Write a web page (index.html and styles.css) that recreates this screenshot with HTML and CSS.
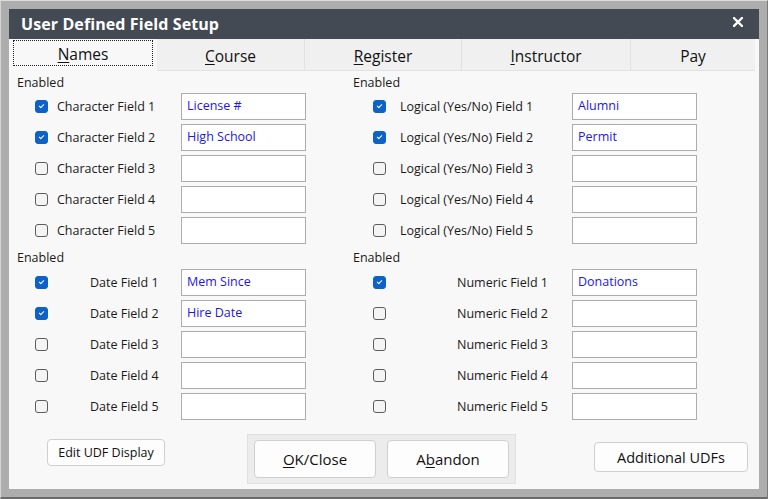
FILE: index.html
```html
<!DOCTYPE html>
<html>
<head>
<meta charset="utf-8">
<link rel="stylesheet" href="styles.css">
</head>
<body>
<div class="frame">
  <div class="dialog">
    <div class="titlebar">
      <span class="title">User Defined Field Setup</span>
      <svg class="close" width="10" height="10" viewBox="0 0 10 10"><path d="M1 1L9 9M9 1L1 9" stroke="#fff" stroke-width="2.4" stroke-linecap="square"/></svg>
    </div>
    <div class="tabs">
      <div class="tab active"><span class="focus"><u>N</u>ames</span></div>
      <div class="tab t-course"><u>C</u>ourse</div>
      <div class="tab t-register"><u>R</u>egister</div>
      <div class="tab t-instr"><u>I</u>nstructor</div>
      <div class="tab t-pay">Pay</div>
    </div>
    <div class="content">
      <div class="section">
        <div class="col left">
          <div class="enabled">Enabled</div>
          <div class="row"><span class="cb on"></span><span class="lbl">Character Field 1</span><span class="inp">License #</span></div>
          <div class="row"><span class="cb on"></span><span class="lbl">Character Field 2</span><span class="inp">High School</span></div>
          <div class="row"><span class="cb"></span><span class="lbl">Character Field 3</span><span class="inp"></span></div>
          <div class="row"><span class="cb"></span><span class="lbl">Character Field 4</span><span class="inp"></span></div>
          <div class="row"><span class="cb"></span><span class="lbl">Character Field 5</span><span class="inp"></span></div>
        </div>
        <div class="col right">
          <div class="enabled">Enabled</div>
          <div class="row"><span class="cb on"></span><span class="lbl">Logical (Yes/No) Field 1</span><span class="inp">Alumni</span></div>
          <div class="row"><span class="cb on"></span><span class="lbl">Logical (Yes/No) Field 2</span><span class="inp">Permit</span></div>
          <div class="row"><span class="cb"></span><span class="lbl">Logical (Yes/No) Field 3</span><span class="inp"></span></div>
          <div class="row"><span class="cb"></span><span class="lbl">Logical (Yes/No) Field 4</span><span class="inp"></span></div>
          <div class="row"><span class="cb"></span><span class="lbl">Logical (Yes/No) Field 5</span><span class="inp"></span></div>
        </div>
      </div>
      <div class="section second">
        <div class="col left date">
          <div class="enabled">Enabled</div>
          <div class="row"><span class="cb on"></span><span class="lbl">Date Field 1</span><span class="inp">Mem Since</span></div>
          <div class="row"><span class="cb on"></span><span class="lbl">Date Field 2</span><span class="inp">Hire Date</span></div>
          <div class="row"><span class="cb"></span><span class="lbl">Date Field 3</span><span class="inp"></span></div>
          <div class="row"><span class="cb"></span><span class="lbl">Date Field 4</span><span class="inp"></span></div>
          <div class="row"><span class="cb"></span><span class="lbl">Date Field 5</span><span class="inp"></span></div>
        </div>
        <div class="col right numeric">
          <div class="enabled">Enabled</div>
          <div class="row"><span class="cb on"></span><span class="lbl">Numeric Field 1</span><span class="inp">Donations</span></div>
          <div class="row"><span class="cb"></span><span class="lbl">Numeric Field 2</span><span class="inp"></span></div>
          <div class="row"><span class="cb"></span><span class="lbl">Numeric Field 3</span><span class="inp"></span></div>
          <div class="row"><span class="cb"></span><span class="lbl">Numeric Field 4</span><span class="inp"></span></div>
          <div class="row"><span class="cb"></span><span class="lbl">Numeric Field 5</span><span class="inp"></span></div>
        </div>
      </div>
      <div class="buttons">
        <div class="btn edit">Edit UDF Display</div>
        <div class="group">
          <div class="btn big"><u>O</u>K/Close</div>
          <div class="btn big">A<u>b</u>andon</div>
        </div>
        <div class="btn extra">Additional UDFs</div>
      </div>
    </div>
  </div>
</div>
</body>
</html>
```

FILE: styles.css
```css
html, body {
  margin: 0;
  padding: 0;
  background: #adadad;
}
body {
  font-family: "Open Sans", "Noto Sans", "Liberation Sans", sans-serif;
  color: #1a1a1a;
}
.frame {
  width: 768px;
  height: 499px;
  box-sizing: border-box;
  background: #adadad;
  border-top: 1px solid #dcdcdc;
  border-left: 1px solid #d4d4d4;
  border-right: 1px solid #7a7a7a;
  border-bottom: 2px solid #6b6b6b;
  padding: 8px 8px 7px 8px;
}
.dialog {
  width: 750px;
  height: 480px;
  background: #f8f8f8;
  display: flex;
  flex-direction: column;
}
.titlebar {
  height: 30px;
  background: #434a53;
  display: flex;
  align-items: center;
  justify-content: space-between;
  padding: 0 16px 0 12px;
}
.title {
  color: #fff;
  font-weight: 700;
  font-size: 16px;
  letter-spacing: 0.1px;
}
.close { margin-top: -4px; }
.tabs {
  display: flex;
  height: 32px;
  padding-left: 4px;
  background: #f8f8f8;
}
.tab {
  box-sizing: border-box;
  display: flex;
  align-items: center;
  justify-content: center;
  font-size: 15.5px;
  background: #f0f0f0;
  border-right: 1px solid #e2e2e2;
  border-bottom: 1px solid #e2e2e2;
  color: #111;
  padding-top: 2px;
}
.tab u { text-underline-offset: 2px; }
.tab.active {
  width: 144px;
  background: #f8f8f8;
  border: none;
  align-items: flex-start;
  padding: 0 4px 0 0;
}
.focus {
  display: flex;
  align-items: center;
  justify-content: center;
  width: 140px;
  height: 26px;
  margin-top: 1px;
  box-sizing: border-box;
  border: 1px dotted #222;
  padding-top: 1px;
}
.t-course { width: 148px; }
.t-register { width: 157px; }
.t-instr { width: 169px; }
.t-pay { width: 124px; border-right: none; }
.content {
  padding: 4px 8px 0 8px;
  flex: 1;
  display: flex;
  flex-direction: column;
}
.section {
  display: grid;
  grid-template-columns: 336px 1fr;
}
.section.second { margin-top: 6px; }
.second .enabled { height: 19px; }
.enabled {
  font-size: 12.5px;
  height: 18px;
  line-height: 16px;
}
.row {
  display: grid;
  align-items: center;
  height: 27px;
  margin-bottom: 4px;
  font-size: 12.5px;
}
.row:last-child { margin-bottom: 0; }
.left .row { grid-template-columns: 18px 13px 9px 124px 125px; }
.right .row { grid-template-columns: 20px 13px 14px 172px 125px; }
.cb { grid-column: 2; }
.lbl { grid-column: 4; white-space: nowrap; }
.inp { grid-column: 5; }
.date .lbl { padding-left: 33px; }
.numeric .lbl { padding-left: 57px; }
.cb {
  width: 13px;
  height: 13px;
  box-sizing: border-box;
  border: 1px solid #5c5c5c;
  border-radius: 3px;
  background: #f4f4f4;
  position: relative;
}
.cb.on {
  background: #0c62c6;
  border-color: #0c62c6;
}
.cb.on::after {
  content: "";
  position: absolute;
  left: 3px;
  top: 3px;
  width: 4px;
  height: 2px;
  border-left: 1px solid #fff;
  border-bottom: 1px solid #fff;
  transform: rotate(-45deg);
}
.inp {
  box-sizing: border-box;
  height: 27px;
  width: 125px;
  background: #fff;
  border: 1px solid #acacac;
  color: #2416e8;
  font-size: 12.5px;
  padding: 3px 0 0 5px;
  line-height: 18px;
  align-self: start;
}
.buttons {
  display: flex;
  align-items: flex-start;
  margin-top: 14px;
}
.btn {
  box-sizing: border-box;
  display: flex;
  align-items: center;
  justify-content: center;
  background: #fdfdfd;
  border: 1px solid #cfcfcf;
  border-radius: 4px;
  color: #111;
}
.btn.edit {
  width: 118px;
  height: 27px;
  margin-top: 5px;
  margin-left: 30px;
  font-size: 12.5px;
}
.group {
  display: flex;
  gap: 11px;
  margin-left: 82px;
  padding: 5px 6px;
  background: #ececec;
  border: 1px solid #e0e0e0;
}
.btn.big {
  width: 122px;
  height: 38px;
  font-size: 15px;
}
.btn.big u { text-underline-offset: 2px; }
.btn.extra {
  width: 154px;
  height: 30px;
  margin-top: 8px;
  margin-left: 78px;
  font-size: 14.5px;
}
```
